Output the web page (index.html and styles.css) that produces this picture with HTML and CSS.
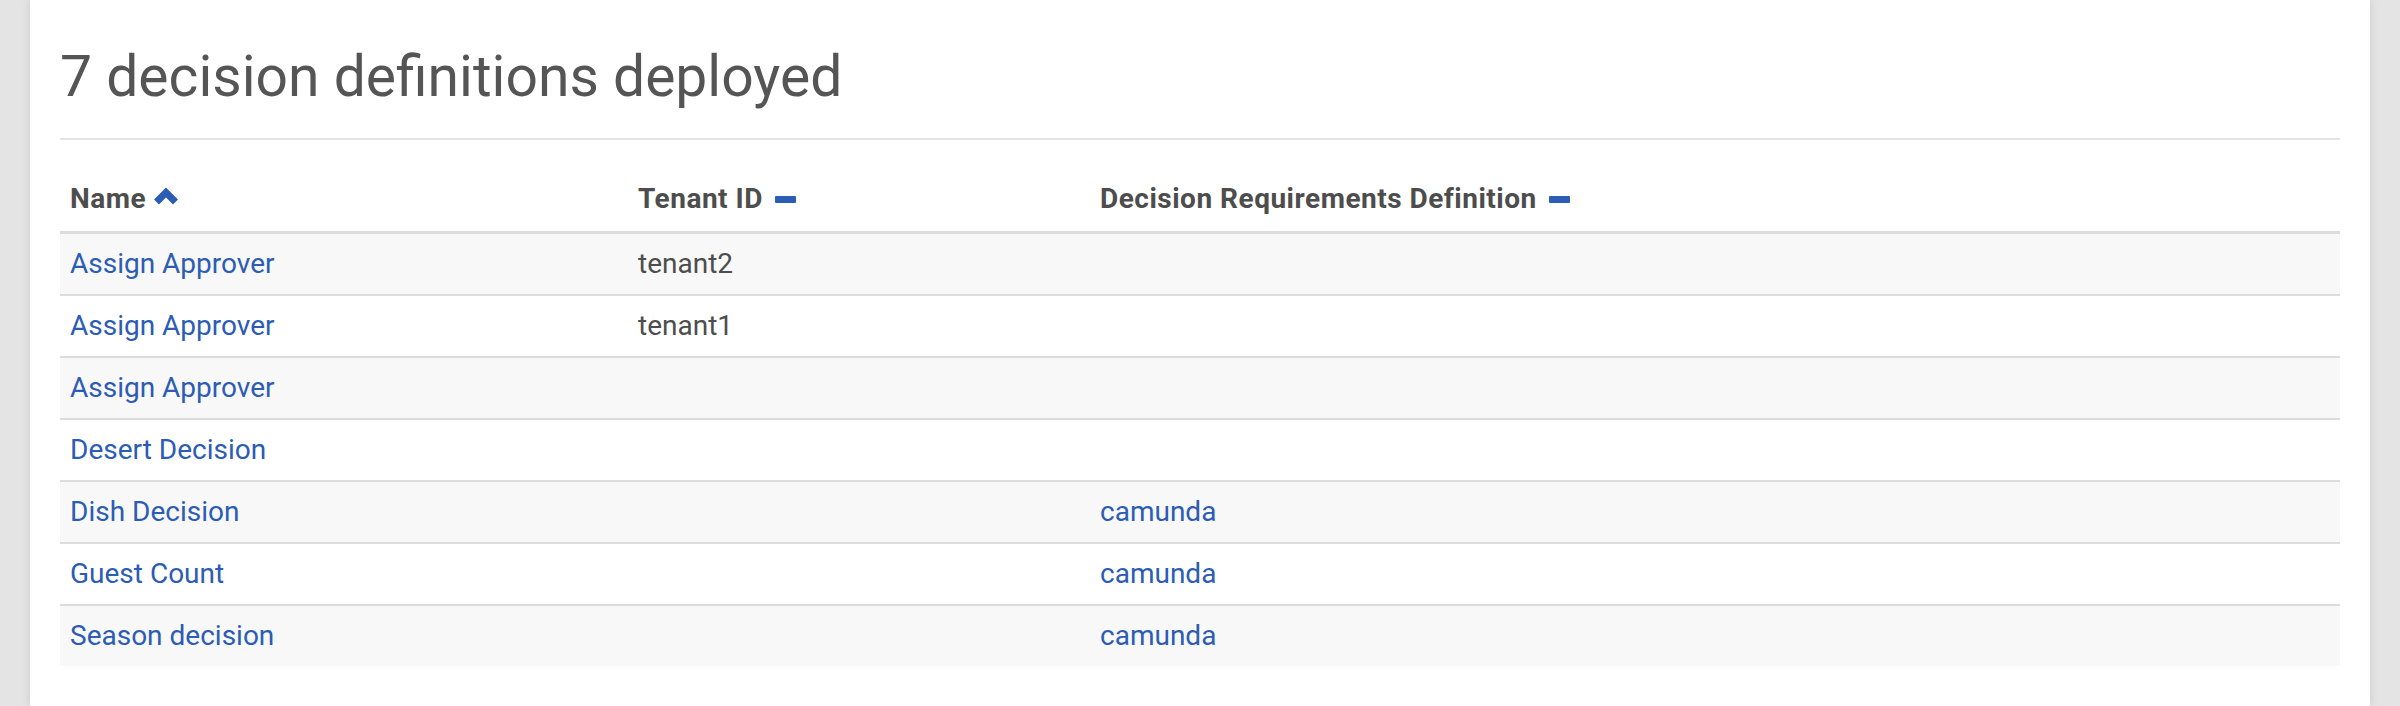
FILE: index.html
```html
<!DOCTYPE html>
<html lang="en">
<head>
<meta charset="utf-8">
<title>Decision definitions</title>
<link rel="stylesheet" href="styles.css">
</head>
<body>
<div class="page">
  <section class="card">
    <h1 class="title">7 decision definitions deployed</h1>
    <table class="defs">
      <colgroup>
        <col class="c-name">
        <col class="c-tenant">
        <col class="c-drd">
      </colgroup>
      <thead>
        <tr>
          <th><span class="th-label">Name</span><svg class="sort-up" width="26" height="18" viewBox="0 0 26 18"><path d="M3.5 15 L13 5.5 L22.5 15" fill="none" stroke="#2c5cb4" stroke-width="7" stroke-linejoin="miter"/></svg></th>
          <th><span class="th-label">Tenant ID</span><span class="sort-none"></span></th>
          <th><span class="th-label">Decision Requirements Definition</span><span class="sort-none"></span></th>
        </tr>
      </thead>
      <tbody>
        <tr><td><a href="#">Assign Approver</a></td><td>tenant2</td><td></td></tr>
        <tr><td><a href="#">Assign Approver</a></td><td>tenant1</td><td></td></tr>
        <tr><td><a href="#">Assign Approver</a></td><td></td><td></td></tr>
        <tr><td><a href="#">Desert Decision</a></td><td></td><td></td></tr>
        <tr><td><a href="#">Dish Decision</a></td><td></td><td><a href="#">camunda</a></td></tr>
        <tr><td><a href="#">Guest Count</a></td><td></td><td><a href="#">camunda</a></td></tr>
        <tr><td><a href="#">Season decision</a></td><td></td><td><a href="#">camunda</a></td></tr>
      </tbody>
    </table>
  </section>
</div>
</body>
</html>
```
FILE: styles.css
```css
html, body {
  margin: 0;
  padding: 0;
  height: 100%;
}
body {
  background: #e4e4e4;
  font-family: Roboto, "Liberation Sans", sans-serif;
  color: #4d4d4d;
  overflow: hidden;
}
.page {
  padding: 0 30px;
  height: 100%;
}
.card {
  background: #ffffff;
  height: 100%;
  padding: 40px 30px 0 30px;
  box-sizing: border-box;
  box-shadow: 0 0 8px rgba(0, 0, 0, 0.12);
}
.title {
  margin: 0;
  font-size: 57px;
  font-weight: 400;
  line-height: 74px;
  color: #555555;
  padding-bottom: 24px;
  border-bottom: 2px solid #e3e3e3;
}
.defs {
  width: 100%;
  border-collapse: collapse;
  table-layout: fixed;
  font-size: 28px;
}
.c-name { width: 568px; }
.c-tenant { width: 462px; }
.defs th {
  text-align: left;
  font-weight: 700;
  color: #4d4d4d;
  height: 79px;
  vertical-align: bottom;
  padding: 0 10px 12px 10px;
  line-height: 40px;
  letter-spacing: 0.5px;
  border-bottom: 3px solid #dcdcdc;
  white-space: nowrap;
}
.th-label {
  vertical-align: middle;
}
.sort-up {
  vertical-align: middle;
  margin-left: 7px;
  position: relative;
  top: -3px;
}
.sort-none {
  display: inline-block;
  width: 21px;
  height: 7px;
  border-radius: 1px;
  background: #2c5cb4;
  margin-left: 12px;
  vertical-align: middle;
}
.defs td {
  height: 60px;
  padding: 0 10px;
  line-height: 40px;
  vertical-align: middle;
  border-bottom: 2px solid #dcdcdc;
  white-space: nowrap;
}
.defs tbody tr:nth-child(odd) td {
  background: #f8f8f8;
}
.defs tbody tr:last-child td {
  border-bottom: none;
}
.defs a {
  color: #2c5cb4;
  text-decoration: none;
}
```
